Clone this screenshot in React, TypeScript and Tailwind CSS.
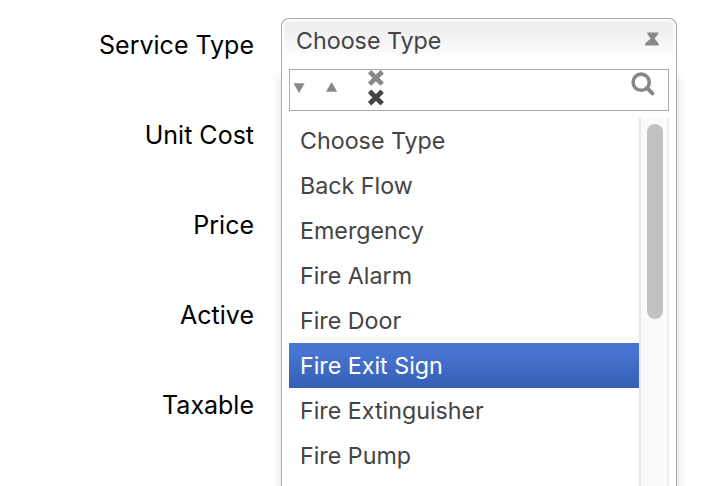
const labels = ["Service Type", "Unit Cost", "Price", "Active", "Taxable"];

const options = [
  "Choose Type",
  "Back Flow",
  "Emergency",
  "Fire Alarm",
  "Fire Door",
  "Fire Exit Sign",
  "Fire Extinguisher",
  "Fire Pump",
];

function SearchBox() {
  return (
    <div className="mx-[7px] mt-px flex h-[42px] shrink-0 items-start justify-between border border-[#aaa]">
      <svg className="h-10 w-[100px] overflow-visible" viewBox="0 0 100 40">
        {/* Down / up arrows */}
        <path d="M3.5 13.3H14.6L9.1 23Z" fill="#888" />
        <path d="M36 21.8H47.2L41.6 12.1Z" fill="#888" />
        {/* Clear buttons */}
        <path d="M79.6 1.7L92.2 14.1M92.2 1.7L79.6 14.1" stroke="#888" strokeWidth="4.8" />
        <path d="M79.6 21.3L92.2 33.7M92.2 21.3L79.6 33.7" stroke="#444" strokeWidth="4.8" />
      </svg>
      <svg className="h-10 w-10" viewBox="0 0 40 40" fill="none" stroke="#888">
        <circle cx="13.2" cy="12.2" r="8.1" strokeWidth="3.6" />
        <path d="M19.2 18.2L24.4 23.4" strokeWidth="4" strokeLinecap="round" />
      </svg>
    </div>
  );
}

function OptionList() {
  return (
    <div className="mx-[7px] mt-[7px] flex min-h-0 flex-1 overflow-hidden">
      <ul className="flex-1">
        {options.map((option) => (
          <li
            key={option}
            className={
              option === "Fire Exit Sign"
                ? "h-[45px] bg-linear-to-b from-[#4875d3] from-20% to-[#365fb3] to-100% pl-[11px] text-[23.25px] leading-[45px] text-white"
                : "h-[45px] pl-[11px] text-[23.25px] leading-[45px]"
            }
          >
            {option}
          </li>
        ))}
      </ul>
      {/* Scrollbar */}
      <div className="flex w-[30px] justify-center border-l-2 border-r-2 border-l-[#e8e8e8] border-r-[#ededed] bg-[#fafafa] pt-1.5">
        <div className="ml-0.5 h-[195px] w-4 rounded-full bg-[#c1c1c1]" />
      </div>
    </div>
  );
}

export default function App() {
  return (
    <div className="flex h-[486px] w-[712px] overflow-hidden bg-white font-['Inter',sans-serif]">
      <div className="w-[254px] shrink-0 text-right text-[25px] text-black">
        {labels.map((label) => (
          <div key={label} className="h-[90px] leading-[90px]">
            {label}
          </div>
        ))}
      </div>

      <div className="ml-[27px] mt-[18px] flex w-[396px] flex-col text-[#444]">
        <div className="flex h-[50px] shrink-0 justify-between rounded-t-lg border border-b-0 border-[#aaa] bg-linear-to-b from-[#eee] from-20% to-white to-80% pl-[14px] pr-[17px] text-[23.25px] leading-[44px] shadow-[inset_0_0_3px_2px_#fff]">
          Choose Type
          <svg className="mt-[13px] h-[14px] w-[14px]" viewBox="0 0 14 14">
            <path d="M2.4 0.4H13.2V2L9.6 6.6L13.6 11.4V13.4H0.2V11.4L5.6 6.6L2.4 2Z" fill="#888" />
          </svg>
        </div>
        <div className="flex min-h-0 flex-1 flex-col border-x border-[#aaa] bg-white shadow-[0_8px_10px_rgba(0,0,0,0.15)]">
          <SearchBox />
          <OptionList />
        </div>
      </div>
    </div>
  );
}
